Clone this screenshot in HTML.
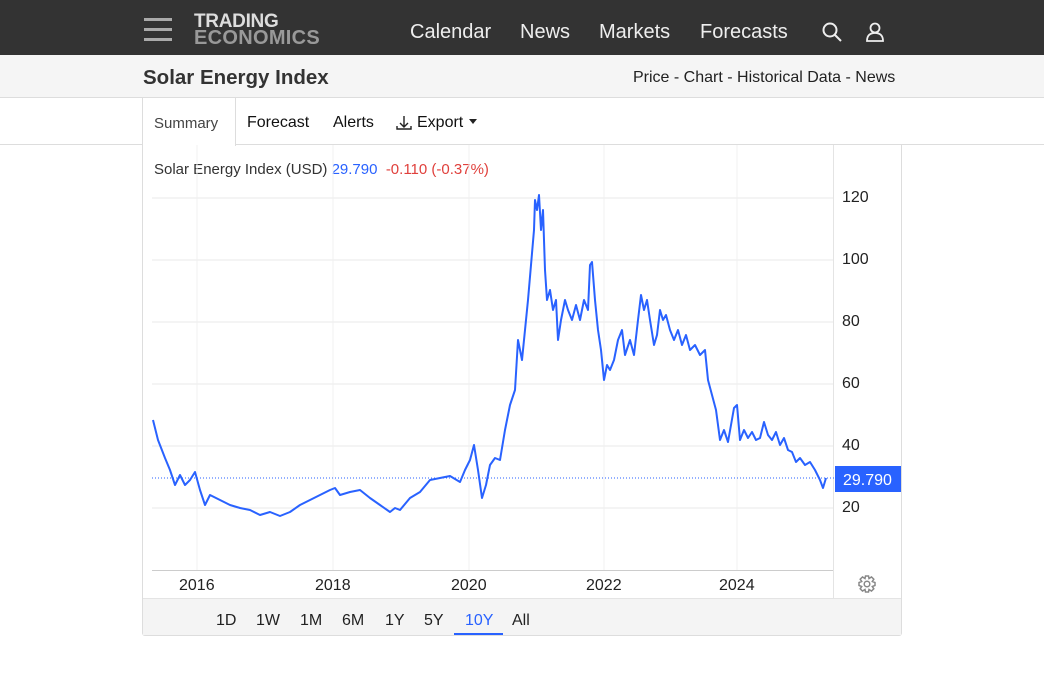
<!DOCTYPE html>
<html><head><meta charset="utf-8"><style>
*{margin:0;padding:0;box-sizing:border-box}
body{width:1044px;height:681px;background:#fff;font-family:"Liberation Sans",Arial,sans-serif;position:relative;overflow:hidden}
.top{position:absolute;left:0;top:0;width:1044px;height:55px;background:#333}
.nav{position:absolute;top:21px;color:#eee;font-size:20px}
.sub{position:absolute;left:0;top:55px;width:1044px;height:43px;background:#f5f5f5;border-bottom:1px solid #ddd}
.tabs{position:absolute;left:0;top:98px;width:1044px;height:47px;border-bottom:1px solid #ddd}
.t{position:absolute;top:114px;font-size:16px;color:#111}
.ax{position:absolute;font-size:16px;color:#222}
</style></head><body>
<div class="top">
<div style="position:absolute;left:144px;top:18px;width:28px;height:3px;background:#aaa"></div>
<div style="position:absolute;left:144px;top:28px;width:28px;height:3px;background:#aaa"></div>
<div style="position:absolute;left:144px;top:38px;width:28px;height:3px;background:#aaa"></div>
<div style="position:absolute;left:194px;top:13px;font-weight:bold;font-size:19px;line-height:17px;color:#ddd;letter-spacing:-0.3px">TRADING</div>
<div style="position:absolute;left:194px;top:30px;font-weight:bold;font-size:20px;line-height:17px;color:#999;letter-spacing:0.3px">ECONOMICS</div>
<div class="nav" style="left:410px">Calendar</div>
<div class="nav" style="left:520px">News</div>
<div class="nav" style="left:599px">Markets</div>
<div class="nav" style="left:700px">Forecasts</div>
<svg style="position:absolute;left:822px;top:22px" width="20" height="20"><circle cx="8" cy="8" r="6.5" stroke="#eee" stroke-width="2" fill="none"/><line x1="13" y1="13" x2="19" y2="19" stroke="#eee" stroke-width="2"/></svg>
<svg style="position:absolute;left:865px;top:22px" width="20" height="20"><circle cx="10" cy="6" r="4.5" stroke="#eee" stroke-width="1.8" fill="none"/><path d="M2 19 Q2 11 10 11 Q18 11 18 19 Z" stroke="#eee" stroke-width="1.8" fill="none"/></svg>
</div>
<div class="sub">
<div style="position:absolute;left:143px;top:11px;font-size:20.5px;font-weight:bold;color:#333">Solar Energy Index</div>
<div style="position:absolute;left:633px;top:14px;font-size:16px;color:#222">Price - Chart - Historical Data - News</div>
</div>
<div class="tabs"></div>
<div style="position:absolute;left:142px;top:98px;width:94px;height:48px;background:#fff;border-left:1px solid #ddd;border-right:1px solid #ddd"></div>
<div class="t" style="left:154px;color:#444;font-size:15px;top:115px">Summary</div>
<div class="t" style="left:247px">Forecast</div>
<div class="t" style="left:333px">Alerts</div>
<svg style="position:absolute;left:396px;top:114px" width="18" height="18"><path d="M8 2 V13 M4 9 L8 13 L12 9 M1 12 V15 H15 V12" stroke="#222" stroke-width="1.4" fill="none"/></svg>
<div class="t" style="left:417px">Export</div>
<svg style="position:absolute;left:469px;top:119px" width="8" height="5"><path d="M0 0 H8 L4 5 Z" fill="#222"/></svg>
<div style="position:absolute;left:142px;top:145px;width:760px;height:491px;border:1px solid #ddd;border-top:none;border-radius:0 0 3px 3px"></div>
<div style="position:absolute;left:143px;top:598px;width:758px;height:37px;background:#f4f4f4;border-top:1px solid #e4e4e4"></div>
<div style="position:absolute;left:154px;top:161px;font-size:15px;color:#333">Solar Energy Index (USD) <span style="color:#2962ff">29.790</span> &nbsp;<span style="color:#e0403c">-0.110 (-0.37%)</span></div>
<svg style="position:absolute;left:0;top:0" width="1044" height="681">
<g stroke="#e8e8e8" stroke-width="1">
<line x1="152" y1="198" x2="833" y2="198"/><line x1="152" y1="260" x2="833" y2="260"/><line x1="152" y1="322" x2="833" y2="322"/><line x1="152" y1="384" x2="833" y2="384"/><line x1="152" y1="446" x2="833" y2="446"/><line x1="152" y1="508" x2="833" y2="508"/>
</g>
<g stroke="#f0f0f0" stroke-width="1">
<line x1="197" y1="145" x2="197" y2="570"/><line x1="333" y1="145" x2="333" y2="570"/><line x1="469" y1="145" x2="469" y2="570"/><line x1="604" y1="145" x2="604" y2="570"/><line x1="737" y1="145" x2="737" y2="570"/>
</g>
<line x1="833.5" y1="145" x2="833.5" y2="598" stroke="#e4e4e4"/>
<line x1="152" y1="570.5" x2="833" y2="570.5" stroke="#ccc"/>
<line x1="152" y1="478" x2="835" y2="478" stroke="#2962ff" stroke-dasharray="1,2"/>
<polyline fill="none" stroke="#2962ff" stroke-width="2" stroke-linejoin="round" points="153,420 158,440 165,458 170,470 175,485 180,475 185,485 190,480 195,472 200,490 205,505 210,495 220,500 230,505 240,508 250,510 260,515 270,512 280,516 290,512 300,505 310,500 320,495 330,490 335,488 340,495 350,492 360,490 370,498 380,505 390,512 395,508 400,510 410,498 420,492 430,480 440,478 450,476 460,482 465,470 470,460 474,445 478,470 482,498 486,485 490,465 495,458 500,460 505,430 510,405 515,390 518,340 522,360 525,330 528,300 531,265 534,230 535,200 537,210 539,195 541,230 543,210 545,270 547,300 550,290 553,310 556,300 558,340 561,320 565,300 568,310 572,320 576,305 580,320 584,300 588,310 590,265 592,262 595,300 598,330 601,350 604,380 607,365 610,370 614,360 618,340 622,330 625,355 630,340 634,355 638,320 641,295 644,310 647,300 650,320 654,345 657,335 660,310 663,320 666,315 670,330 674,340 678,330 682,345 686,335 690,350 695,345 700,355 705,350 708,380 712,395 716,410 720,440 724,430 728,442 731,425 734,408 737,405 740,440 744,430 748,438 752,432 756,440 760,438 764,422 768,435 772,440 776,432 780,445 784,438 788,450 792,452 796,462 800,458 805,465 810,462 815,470 820,480 823,488 826,478"/>
<rect x="835" y="466" width="66" height="26" fill="#2962ff"/>
<text x="843" y="485" font-size="16" fill="#fff" font-family="Liberation Sans">29.790</text>
<g transform="translate(867,584)" fill="none" stroke="#888" stroke-width="1.5">
<path d="M-1.5 -8 H1.5 L2 -5.5 L4.5 -7 L6.8 -4.8 L5.3 -2.5 L8 -1.5 V1.5 L5.3 2.5 L6.8 4.8 L4.5 7 L2 5.5 L1.5 8 H-1.5 L-2 5.5 L-4.5 7 L-6.8 4.8 L-5.3 2.5 L-8 1.5 V-1.5 L-5.3 -2.5 L-6.8 -4.8 L-4.5 -7 L-2 -5.5 Z"/>
<circle r="2.8"/>
</g>
</svg>
<div class="ax" style="left:842px;top:189px">120</div>
<div class="ax" style="left:842px;top:251px">100</div>
<div class="ax" style="left:842px;top:313px">80</div>
<div class="ax" style="left:842px;top:375px">60</div>
<div class="ax" style="left:842px;top:437px">40</div>
<div class="ax" style="left:842px;top:499px">20</div>
<div class="ax" style="left:179px;top:577px">2016</div>
<div class="ax" style="left:315px;top:577px">2018</div>
<div class="ax" style="left:451px;top:577px">2020</div>
<div class="ax" style="left:586px;top:577px">2022</div>
<div class="ax" style="left:719px;top:577px">2024</div>
<div class="ax" style="left:216px;top:612px">1D</div>
<div class="ax" style="left:256px;top:612px">1W</div>
<div class="ax" style="left:300px;top:612px">1M</div>
<div class="ax" style="left:342px;top:612px">6M</div>
<div class="ax" style="left:385px;top:612px">1Y</div>
<div class="ax" style="left:424px;top:612px">5Y</div>
<div class="ax" style="left:465px;top:612px;color:#2962ff">10Y</div>
<div style="position:absolute;left:454px;top:633px;width:49px;height:2px;background:#2962ff"></div>
<div class="ax" style="left:512px;top:612px">All</div>
</body></html>
